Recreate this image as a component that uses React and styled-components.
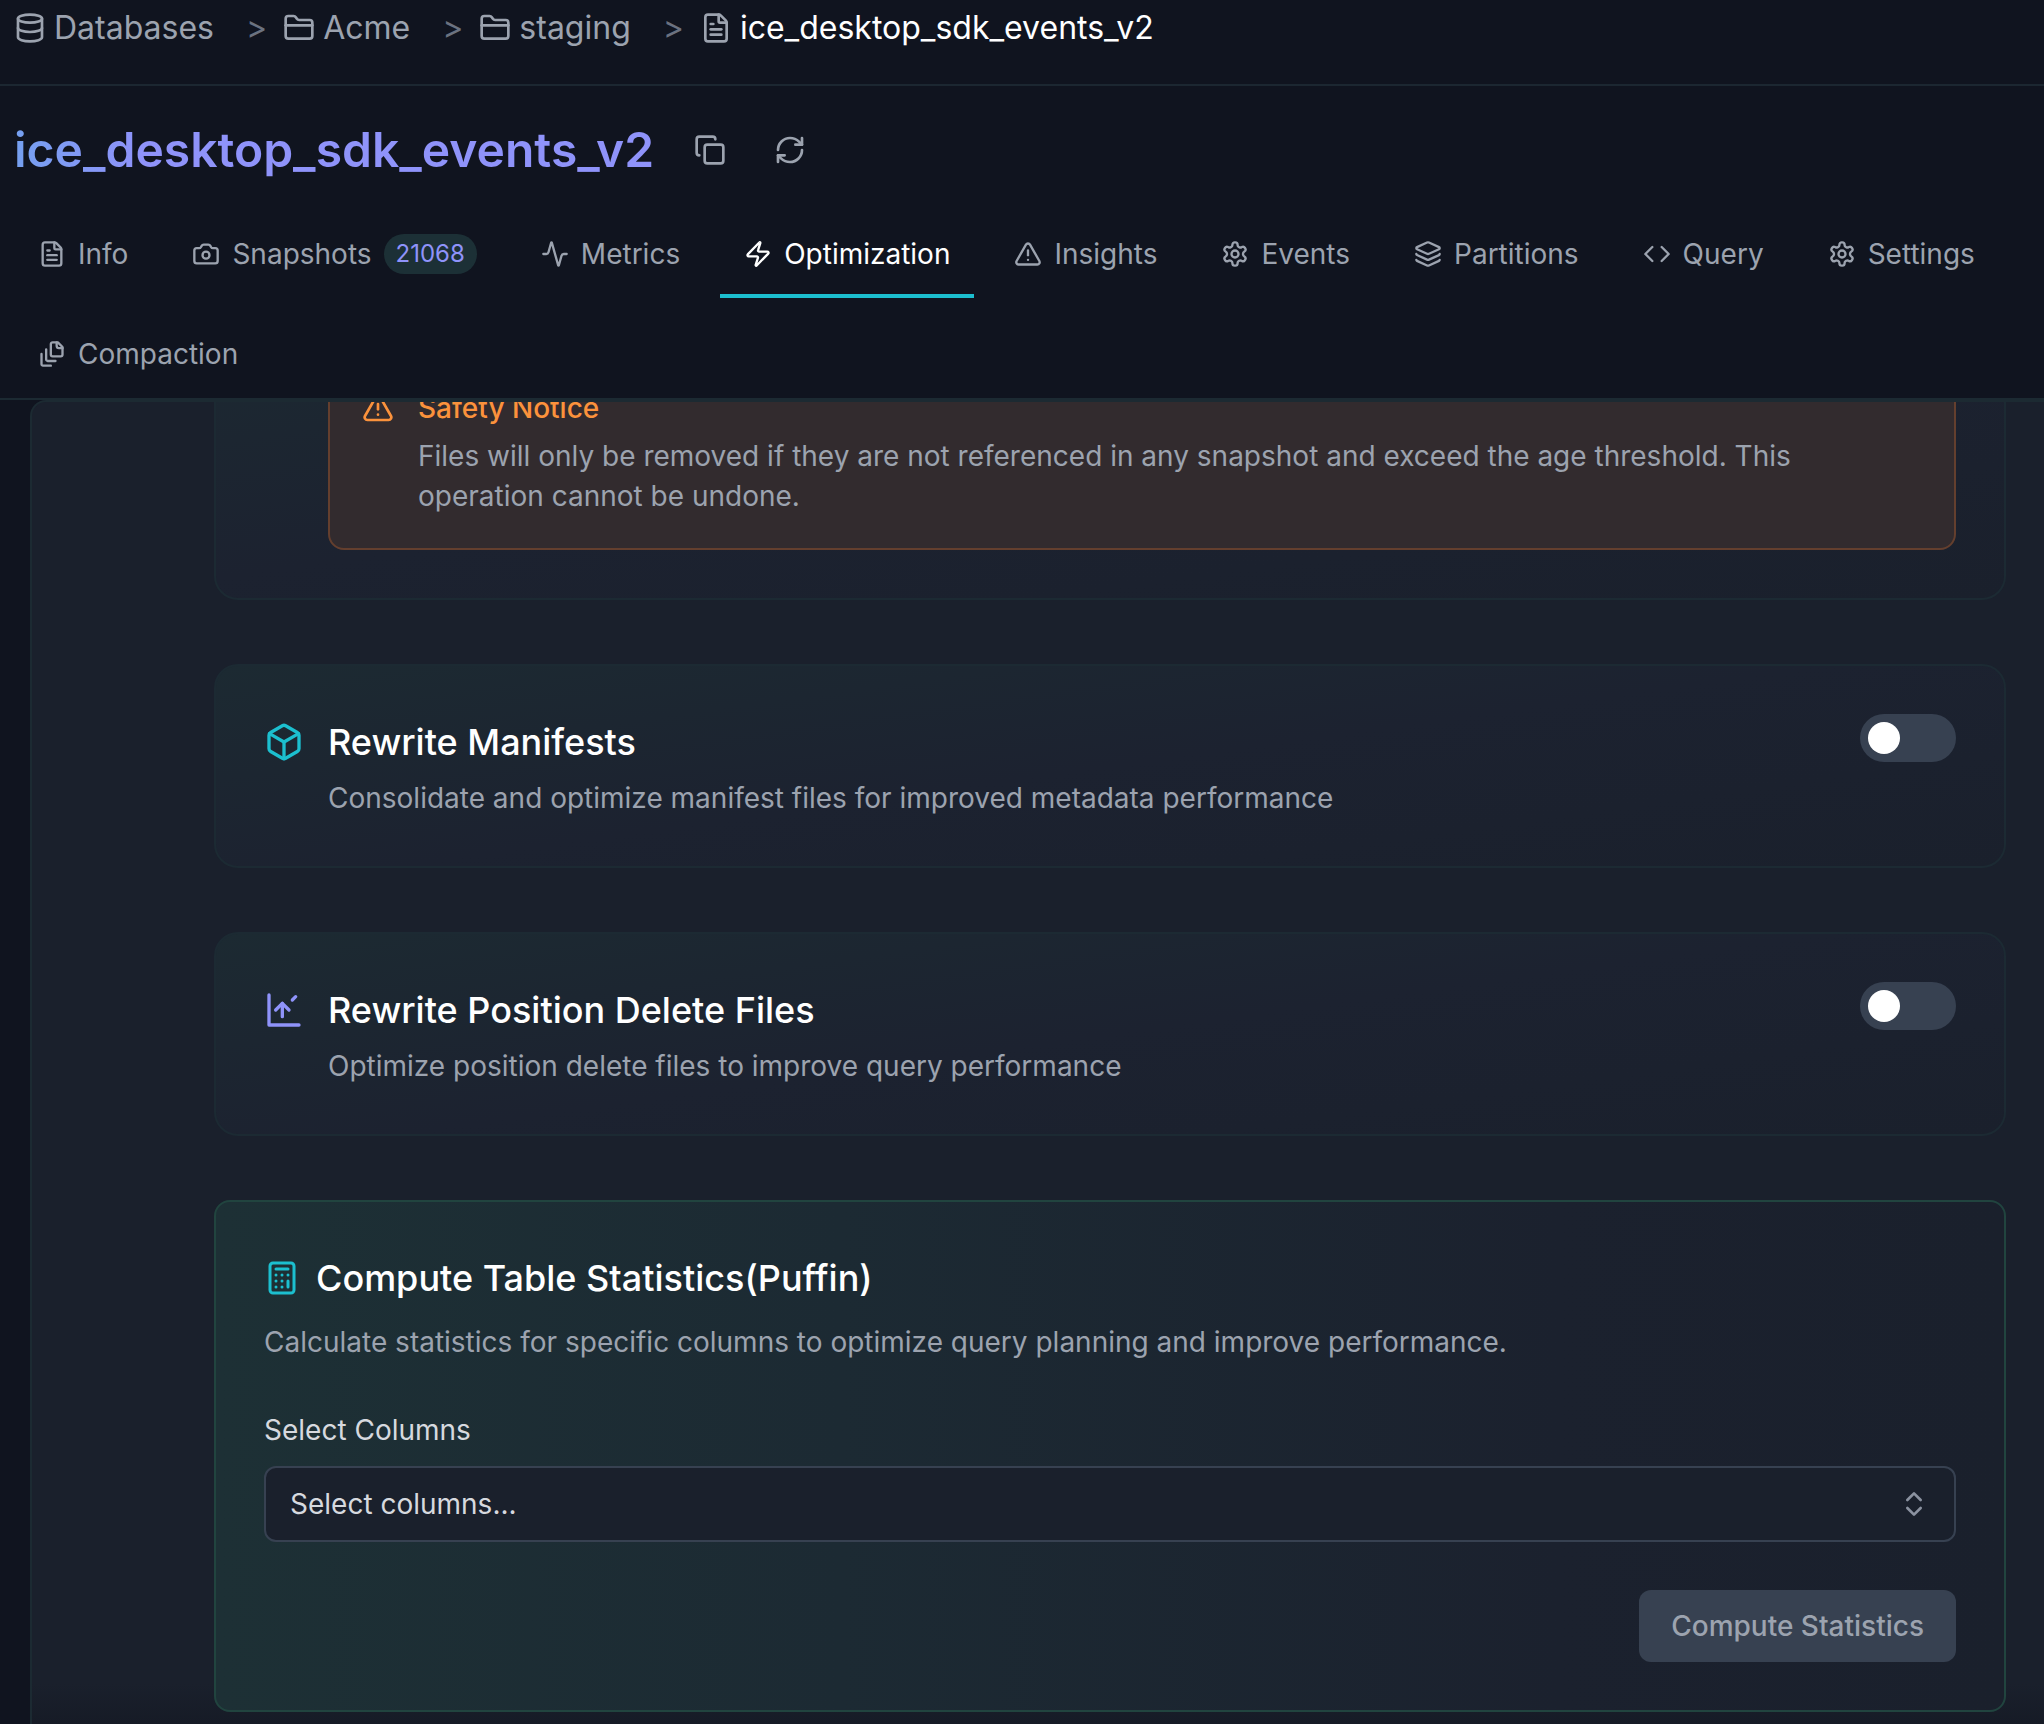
import React, { useState } from "react";
import styled, { createGlobalStyle, css } from "styled-components";
import {
  Activity,
  Box,
  Calculator,
  Camera,
  ChevronsUpDown,
  Code,
  Copy,
  Database,
  FileText,
  FolderClosed,
  Layers,
  RefreshCw,
  TriangleAlert,
  Zap
} from "lucide-react";

const GlobalStyle = createGlobalStyle`
  * {
    box-sizing: border-box;
  }

  body {
    margin: 0;
    background: #10141f;
    color: #9ca3af;
    font-family: Inter, "Liberation Sans", sans-serif;
    font-size: 28px;
    line-height: 40px;
  }

  h1, h2, h3, p, ol {
    margin: 0;
    padding: 0;
  }

  button, select {
    font: inherit;
    color: inherit;
  }

  svg {
    flex: none;
  }
`;

const Page = styled.div`
  display: flex;
  flex-direction: column;
  height: 100vh;
  overflow: hidden;
`;

const Breadcrumbs = styled.nav`
  height: 86px;
  flex: none;
  padding: 4px 14px;
  border-bottom: 2px solid #1c2731;

  ol {
    display: flex;
    align-items: center;
    height: 48px;
    list-style: none;
  }
`;

const Crumb = styled.li`
  display: flex;
  align-items: center;
  font-size: 32px;

  & + &::before {
    content: ">";
    margin: 0 16px 0 32px;
    color: #6b7280;
  }

  a {
    display: flex;
    align-items: center;
    gap: 8px;
    color: #9ca3af;
    text-decoration: none;
  }

  a[aria-current] span {
    color: white;
  }
`;

const Header = styled.header`
  flex: none;
  padding: 32px 14px 0;
  border-bottom: 2px solid #1c2a32;
`;

const TitleRow = styled.div`
  display: flex;
  align-items: center;
  gap: 16px;
  height: 64px;
  margin-bottom: 32px;
`;

const Title = styled.h1`
  margin-right: 8px;
  font-size: 48px;
  line-height: 64px;
  font-weight: 600;
  color: transparent;
  background: linear-gradient(90deg, #75a0f0, #8f93fa 20%, #8f93fa);
  background-clip: text;
`;

const IconButton = styled.button`
  display: flex;
  padding: 16px;
  border: 0;
  background: none;
  cursor: pointer;
`;

const Tabs = styled.div`
  display: flex;
  flex-wrap: wrap;
  gap: 16px;
`;

const Tab = styled.button`
  display: flex;
  align-items: center;
  gap: 12px;
  height: 84px;
  padding: 0 24px;
  border: 0;
  border-bottom: 4px solid transparent;
  background: none;
  cursor: pointer;

  ${props =>
    props.$active &&
    css`
      color: white;
      border-color: #1cbfcf;
    `}
`;

const Count = styled.span`
  padding: 0 12px;
  border-radius: 20px;
  background: #1c3036;
  color: #8f93fa;
  font-size: 24px;
`;

const Panel = styled.main`
  flex: 1;
  min-height: 0;
  margin-left: 30px;
  overflow: hidden;
  border: solid #1c2a32;
  border-width: 2px 0 0 2px;
  border-radius: 16px 0 0 0;
  background: linear-gradient(0deg, #161b26, #1a202c 40px);
`;

/* Scrolled so the top of the first card sits under the header */
const CardList = styled.div`
  display: flex;
  flex-direction: column;
  gap: 64px;
  margin-top: -98px;
  padding: 0 38px 12px 182px;
`;

const Card = styled.section`
  display: flex;
  gap: 24px;
  padding: 48px;
  border: 2px solid #1c2a33;
  border-radius: 24px;
  background: linear-gradient(172deg, #1c2a32, #1c2230 50%, #1a202c);
`;

const CardText = styled.div`
  flex: 1;
`;

const CardTitle = styled.h2`
  display: flex;
  align-items: center;
  gap: 16px;
  color: white;
  font-size: 36px;
  line-height: 56px;
  font-weight: 500;
`;

const CardIcon = styled.div`
  display: flex;
  align-items: center;
  width: 40px;
  height: 56px;
  color: ${props => props.color};
`;

const Description = styled.p`
  margin-top: 8px;
`;

const Notice = styled.div`
  display: flex;
  gap: 24px;
  flex: 1;
  margin-left: 64px;
  padding: 32px;
  border: 2px solid #643f2e;
  border-radius: 16px;
  background: #322b2e;

  svg {
    margin-top: 4px;
    color: #fb923c;
  }

  h3 {
    margin-bottom: 8px;
    color: #fb923c;
    font-size: 28px;
    line-height: 40px;
    font-weight: 500;
  }
`;

const Switch = styled.input`
  appearance: none;
  flex: none;
  width: 96px;
  height: 48px;
  margin: 0;
  padding: 8px;
  border-radius: 24px;
  background: ${props => (props.checked ? "#1cbfcf" : "#374151")};
  cursor: pointer;

  &::before {
    content: "";
    display: block;
    width: 32px;
    height: 32px;
    margin-left: ${props => (props.checked ? "48px" : "0")};
    border-radius: 50%;
    background: white;
  }
`;

const StatsCard = styled.section`
  padding: 48px;
  border: 2px solid #21443f;
  border-radius: 16px;
  background: linear-gradient(90deg, #1d3035, #1c2a33 35%, #1b212e 75%, #1a202c);

  h2 svg {
    color: #1cbfcf;
  }

  p {
    margin-top: 16px;
  }
`;

const Field = styled.div`
  display: flex;
  flex-direction: column;
  gap: 16px;
  margin: 48px 0;
  color: #d6d9df;
`;

const SelectBox = styled.div`
  position: relative;

  select {
    display: block;
    appearance: none;
    width: 100%;
    height: 76px;
    padding: 0 24px;
    border: 2px solid #374151;
    border-radius: 12px;
    background: #1a202c;
  }

  svg {
    position: absolute;
    top: 22px;
    right: 26px;
    color: #8b92a0;
    pointer-events: none;
  }
`;

const SubmitButton = styled.button`
  display: block;
  height: 72px;
  margin-left: auto;
  padding: 0 32px;
  border: 0;
  border-radius: 12px;
  background: #374151;
  color: #9ca3af;
  font-weight: 500;
`;

const Icon = ({ size, children }) => (
  <svg
    width={size}
    height={size}
    viewBox="0 0 24 24"
    fill="none"
    stroke="currentColor"
    strokeWidth="2"
    strokeLinecap="round"
    strokeLinejoin="round"
  >
    {children}
  </svg>
);

const RewriteIcon = ({ size }) => (
  <Icon size={size}>
    <path d="M3 3v18h18" />
    <path d="M11 16V8" />
    <path d="m7 12 4-4 4 4" />
    <path d="m17 6 2-2" />
  </Icon>
);

const Gear = ({ size }) => (
  <Icon size={size}>
    <path d="M12.22 2h-.44a2 2 0 0 0-2 2v.18a2 2 0 0 1-1 1.73l-.43.25a2 2 0 0 1-2 0l-.15-.08a2 2 0 0 0-2.73.73l-.22.38a2 2 0 0 0 .73 2.73l.15.1a2 2 0 0 1 1 1.72v.51a2 2 0 0 1-1 1.74l-.15.09a2 2 0 0 0-.73 2.73l.22.38a2 2 0 0 0 2.73.73l.15-.08a2 2 0 0 1 2 0l.43.25a2 2 0 0 1 1 1.73V20a2 2 0 0 0 2 2h.44a2 2 0 0 0 2-2v-.18a2 2 0 0 1 1-1.73l.43-.25a2 2 0 0 1 2 0l.15.08a2 2 0 0 0 2.73-.73l.22-.39a2 2 0 0 0-.73-2.73l-.15-.08a2 2 0 0 1-1-1.74v-.5a2 2 0 0 1 1-1.74l.15-.09a2 2 0 0 0 .73-2.73l-.22-.38a2 2 0 0 0-2.73-.73l-.15.08a2 2 0 0 1-2 0l-.43-.25a2 2 0 0 1-1-1.73V4a2 2 0 0 0-2-2z" />
    <circle cx="12" cy="12" r="3" />
  </Icon>
);

const Stack = ({ size }) => (
  <Icon size={size}>
    <path d="M21 7h-3a2 2 0 0 1-2-2V2" />
    <path d="M21 6v6.5c0 .8-.7 1.5-1.5 1.5h-7c-.8 0-1.5-.7-1.5-1.5v-9c0-.8.7-1.5 1.5-1.5H17Z" />
    <path d="M7 8v8.800c0 .3.2.6.4.8.2.2.5.4.8.4H15" />
    <path d="M3 12v8.800c0 .3.2.6.4.8.2.2.5.4.8.4H11" />
  </Icon>
);

const crumbs = [
  { label: "Databases", icon: Database },
  { label: "Acme", icon: FolderClosed },
  { label: "staging", icon: FolderClosed },
  { label: "ice_desktop_sdk_events_v2", icon: FileText, current: true }
];

const tabs = [
  { label: "Info", icon: FileText },
  { label: "Snapshots", icon: Camera, count: 21068 },
  { label: "Metrics", icon: Activity },
  { label: "Optimization", icon: Zap },
  { label: "Insights", icon: TriangleAlert },
  { label: "Events", icon: Gear },
  { label: "Partitions", icon: Layers },
  { label: "Query", icon: Code },
  { label: "Settings", icon: Gear },
  { label: "Compaction", icon: Stack }
];

const ToggleCard = ({ id, title, description, icon, color }) => {
  const [enabled, setEnabled] = useState(false);

  return (
    <Card>
      <CardIcon color={color}>{icon}</CardIcon>
      <CardText>
        <CardTitle>
          <label htmlFor={id}>{title}</label>
        </CardTitle>
        <Description>{description}</Description>
      </CardText>
      <Switch
        id={id}
        type="checkbox"
        role="switch"
        checked={enabled}
        onChange={() => setEnabled(!enabled)}
      />
    </Card>
  );
};

export default () => {
  const [activeTab, setActiveTab] = useState("Optimization");

  return (
    <Page>
      <GlobalStyle />
      <Breadcrumbs>
        <ol>
          {crumbs.map(({ label, icon: CrumbIcon, current }) => (
            <Crumb key={label}>
              <a href="#" aria-current={current ? "page" : undefined}>
                <CrumbIcon size={32} />
                <span>{label}</span>
              </a>
            </Crumb>
          ))}
        </ol>
      </Breadcrumbs>
      <Header>
        <TitleRow>
          <Title>ice_desktop_sdk_events_v2</Title>
          <IconButton aria-label="Copy name">
            <Copy size={32} />
          </IconButton>
          <IconButton aria-label="Refresh">
            <RefreshCw size={32} />
          </IconButton>
        </TitleRow>
        <Tabs role="tablist">
          {tabs.map(({ label, icon: TabIcon, count }) => (
            <Tab
              key={label}
              role="tab"
              aria-selected={label === activeTab}
              $active={label === activeTab}
              onClick={() => setActiveTab(label)}
            >
              <TabIcon size={28} />
              {label}
              {count && <Count>{count}</Count>}
            </Tab>
          ))}
        </Tabs>
      </Header>
      <Panel>
        <CardList>
          <Card>
            <Notice>
              <TriangleAlert size={32} />
              <div>
                <h3>Safety Notice</h3>
                <p>
                  Files will only be removed if they are not referenced in any
                  snapshot and exceed the age threshold. This operation cannot
                  be undone.
                </p>
              </div>
            </Notice>
          </Card>
          <ToggleCard
            id="rewrite-manifests"
            title="Rewrite Manifests"
            description="Consolidate and optimize manifest files for improved metadata performance"
            icon={<Box size={40} />}
            color="#1cbfcf"
          />
          <ToggleCard
            id="rewrite-deletes"
            title="Rewrite Position Delete Files"
            description="Optimize position delete files to improve query performance"
            icon={<RewriteIcon size={40} />}
            color="#8f93fa"
          />
          <StatsCard>
            <CardTitle>
              <Calculator size={36} />
              Compute Table Statistics(Puffin)
            </CardTitle>
            <p>
              Calculate statistics for specific columns to optimize query
              planning and improve performance.
            </p>
            <Field>
              <label htmlFor="columns">Select Columns</label>
              <SelectBox>
                <select id="columns">
                  <option>Select columns...</option>
                </select>
                <ChevronsUpDown size={32} />
              </SelectBox>
            </Field>
            <SubmitButton disabled>Compute Statistics</SubmitButton>
          </StatsCard>
        </CardList>
      </Panel>
    </Page>
  );
};
